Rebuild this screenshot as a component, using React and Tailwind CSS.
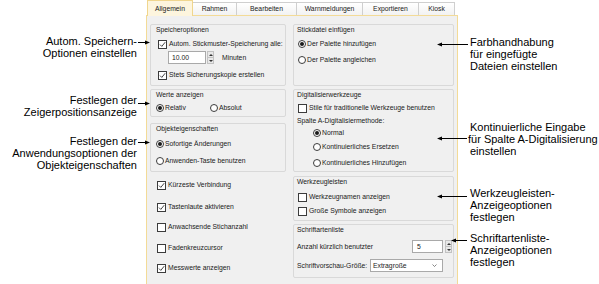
import React from "react";

const tabs = [
  { label: "Allgemein", width: "w-[46px]", active: true },
  { label: "Rahmen", width: "w-[44px]" },
  { label: "Bearbeiten", width: "w-[60px]" },
  { label: "Warnmeldungen", width: "w-[66px]" },
  { label: "Exportieren", width: "w-[56px]" },
  { label: "Kiosk", width: "w-[36px]" },
];

const Check = ({ checked, label, className = "" }) => (
  <div className={`flex h-[10px] items-center whitespace-nowrap ${className}`}>
    <span className="flex h-[9px] w-[9px] shrink-0 items-center justify-center border border-[#3c3c3c] bg-white">
      {checked ? (
        <svg width="7" height="7" viewBox="0 0 7 7">
          <polyline
            points="1,3.6 2.8,5.4 6.2,1.2"
            fill="none"
            stroke="#333"
            strokeWidth="0.9"
          />
        </svg>
      ) : null}
    </span>
    <span className="ml-[2px]">{label}</span>
  </div>
);

const Radio = ({ checked, label, className = "" }) => (
  <div className={`flex h-[10px] items-center whitespace-nowrap ${className}`}>
    <span className="flex h-[8px] w-[8px] shrink-0 items-center justify-center rounded-full border border-[#3c3c3c] bg-white">
      {checked ? (
        <span className="h-[4px] w-[4px] rounded-full bg-[#1a1a1a]" />
      ) : null}
    </span>
    <span className="ml-[1px]">{label}</span>
  </div>
);

const Title = ({ children, className = "pl-[5px]" }) => (
  <div className={`mt-[1px] h-[8px] whitespace-nowrap leading-[8px] ${className}`}>
    {children}
  </div>
);

const Spin = () => (
  <div className="flex w-[7px] flex-col border border-[#c2c2c2] bg-[#e8e8e8]">
    <div className="flex flex-1 items-center justify-center border-b border-[#c2c2c2]">
      <svg width="4" height="2" viewBox="0 0 4 2">
        <polygon points="0,2 4,2 2,0" fill="#333" />
      </svg>
    </div>
    <div className="flex flex-1 items-center justify-center">
      <svg width="4" height="2" viewBox="0 0 4 2">
        <polygon points="0,0 4,0 2,2" fill="#333" />
      </svg>
    </div>
  </div>
);

const Callouts = () => (
  <svg
    className="pointer-events-none absolute left-0 top-0"
    width="599"
    height="284"
    viewBox="0 0 599 284"
  >
    <g stroke="#000" strokeWidth="1">
      <line x1="138" y1="42.5" x2="146" y2="42.5" />
      <line x1="138" y1="103.5" x2="146" y2="103.5" />
      <line x1="138" y1="142.5" x2="146" y2="142.5" />
      <line x1="441" y1="44.5" x2="468" y2="44.5" />
      <line x1="441" y1="138.5" x2="467" y2="138.5" />
      <line x1="441" y1="196.5" x2="467" y2="196.5" />
      <line x1="455" y1="240.5" x2="467" y2="240.5" />
    </g>
    <g fill="#000">
      <polygon points="150,42.5 145,40.5 145,44.5" />
      <polygon points="150,103.5 145,101.5 145,105.5" />
      <polygon points="150,142.5 145,140.5 145,144.5" />
      <polygon points="437,44.5 442,42.5 442,46.5" />
      <polygon points="437,138.5 442,136.5 442,140.5" />
      <polygon points="437,196.5 442,194.5 442,198.5" />
      <polygon points="451,240.5 456,238.5 456,242.5" />
    </g>
  </svg>
);

const App = () => {
  return (
    <div className="relative flex h-[284px] w-[599px] overflow-hidden bg-white font-['Liberation_Sans',Arial,sans-serif] text-black">
      {/* left notes */}
      <div className="w-[146px] shrink-0 pr-[9px] text-right text-[11px] leading-[12px]">
        <p className="mt-[35px]">
          Autom. Speichern-
          <br />
          Optionen einstellen
        </p>
        <p className="mt-[35px]">
          Festlegen der
          <br />
          Zeigerpositionsanzeige
        </p>
        <p className="mt-[17px]">
          Festlegen der
          <br />
          Anwendungsoptionen der
          <br />
          Objekteigenschaften
        </p>
      </div>

      {/* dialog */}
      <div className="flex w-[312px] shrink-0 flex-col text-[6.8px] leading-[10px] text-[#1a1a1a]">
        <div className="flex h-[15px] items-end pl-[1px]">
          {tabs.map((tab) =>
            tab.active ? (
              <div
                key={tab.label}
                className={`relative z-10 -mb-px flex h-[16px] items-center justify-center border-x border-t border-[#f0d68e] bg-[#fdf5de] ${tab.width}`}
              >
                {tab.label}
              </div>
            ) : (
              <div
                key={tab.label}
                className={`flex h-[13px] items-center justify-center border-r border-t border-[#cfcfcf] bg-gradient-to-b from-white to-[#f2f2f2] ${tab.width}`}
              >
                {tab.label}
              </div>
            ),
          )}
        </div>

        <div className="flex flex-1 border-x border-t border-[#f3db97] bg-[#f0f0f0] pl-[3px] pr-[3px] pt-[8px]">
          {/* left column */}
          <div className="flex w-[136px] shrink-0 flex-col">
            <div className="flex h-[62px] flex-col rounded-[2px] border border-[#d9d9d9]">
              <Title>Speicheroptionen</Title>
              <Check
                checked
                label="Autom. Stickmuster-Speicherung alle:"
                className="ml-[7px] mt-[5px]"
              />
              <div className="ml-[17px] mt-[2px] flex h-[13px] items-center">
                <div className="flex h-[13px] w-[38px] items-center border border-[#a9a9a9] bg-white pl-[3px]">
                  10.00
                </div>
                <div className="ml-px flex h-[13px]">
                  <Spin />
                </div>
                <span className="ml-[8px]">Minuten</span>
              </div>
              <Check
                checked
                label="Stets Sicherungskopie erstellen"
                className="ml-[7px] mt-[6px]"
              />
            </div>

            <div className="mt-[3px] flex h-[28px] flex-col rounded-[2px] border border-[#d9d9d9]">
              <Title>Werte anzeigen</Title>
              <div className="ml-[5px] mt-[4px] flex">
                <Radio checked label="Relativ" className="w-[54px]" />
                <Radio label="Absolut" />
              </div>
            </div>

            <div className="mt-[6px] flex h-[49px] flex-col rounded-[2px] border border-[#d9d9d9]">
              <Title>Objekteigenschaften</Title>
              <Radio
                checked
                label="Sofortige Änderungen"
                className="ml-[5px] mt-[6px]"
              />
              <Radio
                label="Anwenden-Taste benutzen"
                className="ml-[5px] mt-[7px]"
              />
            </div>

            <Check checked label="Kürzeste Verbindung" className="ml-[7px] mt-[8px]" />
            <Check checked label="Tastenlaute aktivieren" className="ml-[7px] mt-[12px]" />
            <Check label="Anwachsende Stichanzahl" className="ml-[7px] mt-[10px]" />
            <Check label="Fadenkreuzcursor" className="ml-[7px] mt-[11px]" />
            <Check checked label="Messwerte anzeigen" className="ml-[7px] mt-[10px]" />
          </div>

          {/* right column */}
          <div className="ml-[7px] flex w-[161px] shrink-0 flex-col">
            <div className="flex h-[62px] flex-col rounded-[2px] border border-[#d9d9d9]">
              <Title className="pl-[3px]">Stickdatei einfügen</Title>
              <Radio
                checked
                label="Der Palette hinzufügen"
                className="ml-[4px] mt-[5px]"
              />
              <Radio label="Der Palette angleichen" className="ml-[4px] mt-[6px]" />
            </div>

            <div className="mt-[3px] flex h-[83px] flex-col rounded-[2px] border border-[#d9d9d9]">
              <Title className="pl-[3px]">Digitalisierwerkzeuge</Title>
              <Check
                label="Stile für traditionelle Werkzeuge benutzen"
                className="ml-[4px] mt-[4px]"
              />
              <div className="mt-[3px] h-[10px] whitespace-nowrap pl-[3px]">
                Spalte A-Digitalisiermethode:
              </div>
              <Radio checked label="Normal" className="ml-[19px] mt-[2px]" />
              <Radio label="Kontinuierliches Ersetzen" className="ml-[19px] mt-[4px]" />
              <Radio label="Kontinuierliches Hinzufügen" className="ml-[19px] mt-[6px]" />
            </div>

            <div className="mt-[4px] flex h-[45px] flex-col rounded-[2px] border border-[#d9d9d9]">
              <Title className="pl-[3px]">Werkzeugleisten</Title>
              <Check label="Werkzeugnamen anzeigen" className="ml-[4px] mt-[6px]" />
              <Check label="Große Symbole anzeigen" className="ml-[4px] mt-[4px]" />
            </div>

            <div className="mt-[3px] flex h-[54px] flex-col rounded-[2px] border border-[#d9d9d9]">
              <Title className="pl-[3px]">Schriftartenliste</Title>
              <div className="mt-[6px] flex h-[13px] items-center">
                <span className="whitespace-nowrap pl-[3px]">Anzahl kürzlich benutzter</span>
                <div className="ml-auto mr-px flex h-[13px]">
                  <div className="flex w-[31px] items-center border border-[#a9a9a9] bg-white pl-[4px]">
                    5
                  </div>
                  <div className="ml-[2px] flex">
                    <Spin />
                  </div>
                </div>
              </div>
              <div className="mt-[6px] flex h-[13px] items-center">
                <span className="w-[76px] shrink-0 whitespace-nowrap pl-[3px]">
                  Schriftvorschau-Größe:
                </span>
                <div className="flex h-[13px] w-[73px] items-center justify-between border border-[#a9a9a9] bg-white pl-[2px] pr-[5px]">
                  <span>Extragroße</span>
                  <svg width="5" height="3" viewBox="0 0 5 3">
                    <polyline points="0.5,0.5 2.5,2.5 4.5,0.5" fill="none" stroke="#555" strokeWidth="0.7" />
                  </svg>
                </div>
              </div>
            </div>
          </div>
        </div>
      </div>

      {/* right notes */}
      <div className="flex-1 pl-[12px] text-[11px] leading-[12px]">
        <p className="mt-[36px] whitespace-nowrap">
          Farbhandhabung
          <br />
          für eingefügte
          <br />
          Dateien einstellen
        </p>
        <p className="-ml-[2px] mt-[49px] whitespace-nowrap">
          <span className="ml-[2px]">Kontinuierliche Eingabe</span>
          <br />
          für Spalte A-Digitalisierung
          <br />
          <span className="ml-[2px]">einstellen</span>
        </p>
        <p className="mt-[30px] whitespace-nowrap">
          Werkzeugleisten-
          <br />
          Anzeigeoptionen
          <br />
          festlegen
        </p>
        <p className="mt-[9px] whitespace-nowrap">
          Schriftartenliste-
          <br />
          Anzeigeoptionen
          <br />
          festlegen
        </p>
      </div>

      <Callouts />
    </div>
  );
};

export default App;
